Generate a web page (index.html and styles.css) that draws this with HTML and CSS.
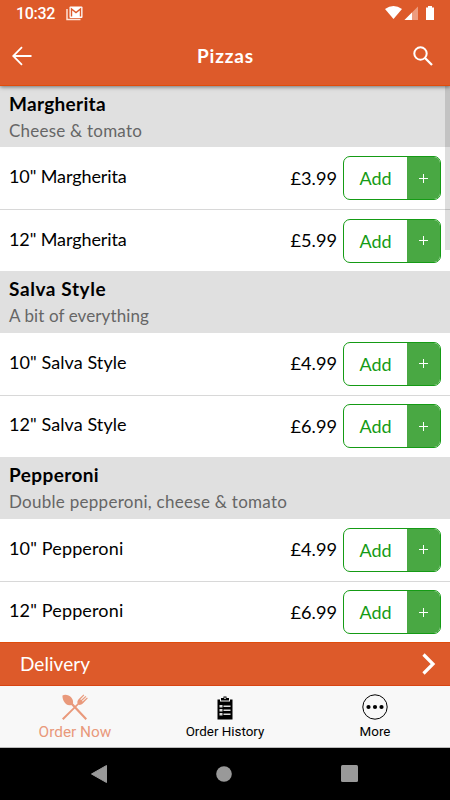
FILE: index.html
```html
<!DOCTYPE html>
<html lang="en">
<head>
<meta charset="utf-8">
<meta name="viewport" content="width=device-width, initial-scale=1">
<title>Pizzas</title>
<link rel="stylesheet" href="styles.css">
</head>
<body>
<div class="app">
  <header class="header">
    <div class="status">
      <span class="clock">10:32</span>
      <svg class="mail" width="17" height="15" viewBox="0 0 17 15"><path d="M1 3v10.500h13.500" fill="none" stroke="#ffe4d8" stroke-width="1.500"/><rect x="3.500" y="0.500" width="13" height="11.500" rx="1" fill="#fff"/><path d="M5.500 10.500V3l4.500 3.500L14.500 3v7.500" fill="none" stroke="#dd5a2a" stroke-width="1.400"/></svg>
      <svg class="signals" width="50" height="16" viewBox="0 0 50 16"><path d="M0 4Q8.500-2 17 4L8.500 14z" fill="#fff"/><path d="M33 1.500V15H19.500z" fill="#ed9c7e"/><path d="M27 7.500V15h-7.500z" fill="#fff"/><path d="M41 2.500h2V1h4v1.500h2V15h-8z" fill="#fff"/></svg>
    </div>
    <div class="titlebar">
      <svg class="back" width="20" height="20" viewBox="0 0 20 20"><path d="M19.500 10H1.500M10 1.200L1.200 10l8.800 8.800" fill="none" stroke="#fff" stroke-width="1.800"/></svg>
      <h1>Pizzas</h1>
      <svg class="search" width="20" height="20" viewBox="0 0 20 20"><circle cx="7.500" cy="7.500" r="6.200" fill="none" stroke="#fff" stroke-width="2"/><path d="M12 12l7 7" stroke="#fff" stroke-width="2.300"/></svg>
    </div>
  </header>
  <main class="menu">
    <section class="group">
      <div class="heading"><h2>Margherita</h2><p>Cheese &amp; tomato</p></div>
      <div class="item"><span class="name">10" Margherita</span><span class="price">£3.99</span><span class="add"><b>Add</b><i></i></span></div>
      <div class="item"><span class="name">12" Margherita</span><span class="price">£5.99</span><span class="add"><b>Add</b><i></i></span></div>
    </section>
    <section class="group salva">
      <div class="heading"><h2>Salva Style</h2><p>A bit of everything</p></div>
      <div class="item"><span class="name">10" Salva Style</span><span class="price">£4.99</span><span class="add"><b>Add</b><i></i></span></div>
      <div class="item"><span class="name">12" Salva Style</span><span class="price">£6.99</span><span class="add"><b>Add</b><i></i></span></div>
    </section>
    <section class="group pepperoni">
      <div class="heading"><h2>Pepperoni</h2><p>Double pepperoni, cheese &amp; tomato</p></div>
      <div class="item"><span class="name">10" Pepperoni</span><span class="price">£4.99</span><span class="add"><b>Add</b><i></i></span></div>
      <div class="item"><span class="name">12" Pepperoni</span><span class="price">£6.99</span><span class="add"><b>Add</b><i></i></span></div>
    </section>
    <div class="scrollbar"></div>
  </main>
  <div class="delivery"><span>Delivery</span><svg width="14" height="22" viewBox="0 0 14 22"><path d="M1.500 1.500L11 11l-9.500 9.500" fill="none" stroke="#fff" stroke-width="3.200"/></svg></div>
  <nav class="tabs">
    <div class="tab active">
      <svg width="26" height="26" viewBox="0 0 26 26"><g fill="#e9997b"><path d="M.5 1.500C3 0 7 .8 9.300 3.500c1.700 2 2 4 1.700 6L25 24.500 23.500 26 9.300 11C6 12 3.500 10 2 7.500.8 5.500.3 3 .5 1.500z"/><path d="M1.500 26L0 24.500 15.500 9.500c-.4-2 .2-3.300 1.300-4.500L21.500.500l.8.700-4 4.200.8.700L23.500 2l.8.700-4.400 4.200.7.700L25 3.500l.8.800-5 5.200c-1.200 1.200-2.500 1.600-4.300 1.300z"/></g></svg>
      <span>Order Now</span>
    </div>
    <div class="tab">
      <svg class="board" width="16" height="24" viewBox="0 0 16 24"><path d="M.5 3.500h15V23.500H.5z" fill="#000"/><path d="M3 3h10v2.500H3z" fill="#f8f8f8"/><path d="M4 2h2.500V.5h3V2H12v2.500H4z" fill="#000"/><path d="M7.300 1.500h1.400V3H7.300z" fill="#f8f8f8"/><path d="M2.500 9h3v2.500h-3zM2.500 13h3v2.500h-3zM2.500 17h3v2.500h-3zM6.500 9.500h7v1.500h-7zM6.500 13.500h7V15h-7zM6.500 17.500h7V19h-7z" fill="#ddd"/></svg>
      <span>Order History</span>
    </div>
    <div class="tab">
      <svg width="26" height="26" viewBox="0 0 26 26"><circle cx="13" cy="13" r="12.200" fill="none" stroke="#000"/><circle cx="6.500" cy="13" r="2.100"/><circle cx="13" cy="13" r="2.100"/><circle cx="19.500" cy="13" r="2.100"/></svg>
      <span>More</span>
    </div>
  </nav>
  <footer class="system">
    <svg width="16" height="18" viewBox="0 0 16 18"><path d="M15.500.500v17L.5 9z" fill="#999" stroke="#999" stroke-linejoin="round"/></svg>
    <svg width="16" height="16" viewBox="0 0 16 16"><circle cx="8" cy="8" r="7.800" fill="#999"/></svg>
    <svg width="17" height="17" viewBox="0 0 17 17"><rect width="17" height="17" rx="1.500" fill="#999"/></svg>
  </footer>
</div>
</body>
</html>
```
FILE: styles.css
```css
* { box-sizing: border-box; }
body { margin: 0; font-family: Lato, "Open Sans", sans-serif; color: #000; }
h1, h2, p { margin: 0; }
svg { display: block; flex: none; }
.app { width: 450px; height: 800px; display: flex; flex-direction: column; overflow: hidden; background: #fff; }

.header { height: 85.600px; flex: none; background: #dd5a2a; border-bottom: 1px solid #e04c0b; color: #fff; box-shadow: 0 1px 4px rgba(0,0,0,.5); position: relative; z-index: 1; }
.status { height: 28px; display: flex; align-items: center; padding: 0 15px 0 16px; }
.clock { font: 500 16px/28px Roboto, sans-serif; width: 50px; letter-spacing: -.3px; }
.mail { margin-top: -1px; }
.signals { margin-left: auto; margin-top: -3px; }
.titlebar { height: 56px; display: flex; align-items: center; justify-content: space-between; padding: 0 17px 0 12px; }
.titlebar h1 { font-size: 19px; line-height: 24px; font-weight: 700; letter-spacing: .85px; margin: -1px 0 0 6px; }

.menu { height: 556.900px; flex: none; position: relative; }
.group { height: 185.700px; display: flex; flex-direction: column; }
.heading { height: 61.600px; flex: none; background: #e0e0e0; padding: 6px 9px 0; }
.heading h2 { font-size: 19px; line-height: 24px; font-weight: 700; letter-spacing: .3px; }
.heading p { font-size: 17px; line-height: 24px; margin-top: 3px; color: #666; letter-spacing: .23px; }
.salva h2 { letter-spacing: .6px; }
.pepperoni h2 { letter-spacing: .4px; }
.salva p { letter-spacing: .1px; }
.pepperoni p { letter-spacing: .28px; }
.item { height: 62px; display: flex; align-items: center; padding: 0 9px; }
.item + .item { border-top: 1px solid #d8d8d8; }
.name { flex: 1; font-size: 18px; line-height: 24px; letter-spacing: -.1px; margin-top: -4px; }
.salva .name { letter-spacing: .08px; }
.pepperoni .name { letter-spacing: .15px; }
.price { font-size: 18.200px; line-height: 24px; margin: -1px 6px 0 0; }
.add { width: 98px; height: 44px; border: 1px solid #159b15; border-radius: 7px; overflow: hidden; display: flex; color: #159b15; }
.add b { flex: 1; text-align: center; font-weight: 400; font-size: 18px; line-height: 42px; }
.add i { width: 33px; background: linear-gradient(#fff, #fff) 50% 50% / 9px 1px no-repeat, linear-gradient(#fff, #fff) 50% 50% / 1px 9px no-repeat, #49a843; }
.scrollbar { position: absolute; right: 0; top: 0; width: 5px; height: 164px; background: rgba(0,0,0,.13); }

.delivery { height: 43.500px; flex: none; background: #dd5a2a; border-top: 1px solid #e04c0b; border-bottom: 1px solid #d84412; color: #fff; display: flex; align-items: center; justify-content: space-between; padding: 0 14px 0 20px; font-size: 19px; line-height: 24px; letter-spacing: .05px; }
.tabs { height: 62px; flex: none; background: #f8f8f8; display: grid; grid-template-columns: repeat(3, 1fr); border-bottom: 1px solid #bbb; }
.tab { display: flex; flex-direction: column; align-items: center; justify-content: space-between; padding: 8px 0 5px; font: 13.400px/20px Roboto, sans-serif; }
.board { margin-top: 2px; }
.active { color: #e9997b; font-size: 15.400px; }
.system { height: 52px; flex: none; background: #000; display: flex; align-items: center; justify-content: space-between; padding: 0 92px 0 91px; }
```
